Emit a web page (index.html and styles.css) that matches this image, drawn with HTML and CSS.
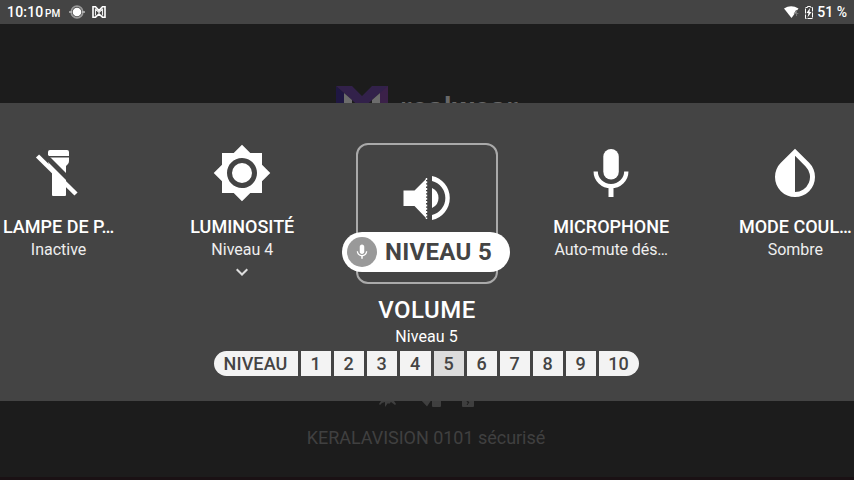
FILE: index.html
```html
<!DOCTYPE html>
<html lang="fr">
<head>
<meta charset="utf-8">
<title>Volume</title>
<link rel="stylesheet" href="styles.css">
</head>
<body>
<div class="screen">
  <header class="status">
    <span class="time">10:10</span><span class="ampm">PM</span>
    <svg class="st-ring" width="16" height="14" viewBox="0 0 16 14"><circle cx="8" cy="7" r="5.800" fill="none" stroke="#999" stroke-width="1.700"/><circle cx="8" cy="7" r="4.300" fill="#fff"/><path d="M0 7h3M13 7h3" stroke="#bbb" stroke-width="1.3"/></svg>
    <svg class="st-logo" width="14" height="12" viewBox="0 0 14 12"><path d="M1 .8h2.500L7 4.500 10.500.8H13v10.400h-2.500L7 8l-3.500 3.200H1z" fill="none" stroke="#fff" stroke-width="1.600"/><path d="M3.500 2.500v7M10.500 2.500v7M3.500 3L7 6.500 10.500 3" fill="none" stroke="#eee" stroke-width="1.100"/></svg>
    <span class="spacer"></span>
    <svg class="st-wifi" width="15" height="12" viewBox="0 0 15 12"><path d="M0 2.500Q7-2 14.500 2.500L7.500 12z" fill="#fff"/><path d="M12.500 4v6M10.300 7.500h4M12.500 4l-2.200 3.500" stroke="#777" stroke-width="1" fill="none"/></svg>
    <svg class="st-batt" width="8" height="13" viewBox="0 0 8 13"><path d="M2.500 1.500V.5h3v1h2v11h-7v-11z" fill="none" stroke="#fff" stroke-width="1" stroke-dasharray="5 1"/><path d="M5 2L1.500 7h2l-1 4.500L6.500 6h-2z" fill="#fff"/></svg>
    <span class="pct">51&nbsp;%</span>
  </header>

  <main class="home">
    <div class="brand">
      <svg width="52" height="48" viewBox="0 0 52 48"><path d="M0 0l8 7v41H0z" fill="#1f1742"/><path d="M0 0h16l10 10L36 0h16v48h-8V7L26 23 8 7z" fill="#32214a"/><path d="M44 7l8-7v48h-8z" fill="#3b2149"/><path d="M8 7l8 7v20H8zM44 7l-8 7v20h8z" fill="#6c6c6c"/></svg>
      <svg class="word" width="120" height="34" viewBox="0 0 120 34"><text x="0" y="27" textLength="118">realwear</text></svg>
    </div>
    <div class="glyphs">
      <svg width="20" height="18" viewBox="0 0 20 18"><path d="M1 12V8h15v4l2 3-1 1-4-3-2 2-1-1-3 4v-5l-3 1-2 2-1-1 2-3z"/></svg>
      <svg width="22" height="18" viewBox="0 0 22 18"><path d="M1 10h12l-5 7.500zM13 8h9v9q0 1-1 1h-7q-1 0-1-1z"/></svg>
      <svg width="12" height="18" viewBox="0 0 12 18"><path d="M0 4h12v13q0 1-1 1H1q-1 0-1-1z"/><path d="M7 9l-2 4h2l-2 3" fill="none" stroke="#1c1c1c"/></svg>
    </div>
    <div class="network">KERALAVISION 0101 sécurisé</div>
  </main>

  <section class="panel">
    <div class="carousel">
      <div class="item">
        <svg class="icon torch" width="60" height="60" viewBox="0 0 60 60"><path d="M21 6q0-2 2-2h17q2 0 2 2v4H21zM21 11.500h21v3.500q0 2-1.500 3.500L39 20v29q0 1-1 1H26q-1 0-1-1V22q-4-3-4-7z" fill="#fff"/><path d="M14 5.500L51.500 43" stroke="#444" stroke-width="5"/><path d="M10.500 10L49 48" stroke="#fff" stroke-width="4.500"/></svg>
        <h3>LAMPE DE P…</h3><p>Inactive</p>
      </div>
      <div class="item lum">
        <svg class="icon" width="60" height="60" viewBox="0 0 24 24"><path fill="#fff" d="M20 15.310L23.310 12 20 8.690V4h-4.690L12 .690 8.690 4H4v4.690L.690 12 4 15.310V20h4.690L12 23.310 15.310 20H20v-4.690zM12 18c-3.310 0-6-2.690-6-6s2.690-6 6-6 6 2.690 6 6-2.690 6-6 6zM12 8a4 4 0 1 0 0 8 4 4 0 0 0 0-8z"/></svg>
        <h3>LUMINOSITÉ</h3><p>Niveau 4</p>
        <svg class="chev" width="12" height="8" viewBox="0 0 12 8"><path d="M.7 1.200l5.300 5.300 5.300-5.300" fill="none" stroke="#ddd" stroke-width="2"/></svg>
      </div>
      <div class="item">
        <div class="focus">
          <svg width="48" height="46" viewBox="0 0 48 46"><path d="M.5 15.500h11L23 4v39L11.500 31H.5z" fill="#fff"/><path d="M23.500 3v41" stroke="#fff" stroke-width="1.400" stroke-dasharray="2 1.300"/><path d="M29 13q6.500 3 6.500 10T29 33z" fill="#fff"/><path d="M29 1A22.500 22.500 0 0 1 29 45v-5A17.500 17.500 0 0 0 29 6z" fill="#fff"/></svg>
          <div class="voice">
            <span class="dot"><svg width="18" height="18" viewBox="0 0 24 24"><path fill="#fff" d="M12 14.500c1.660 0 3-1.340 3-3V5c0-1.660-1.340-3-3-3S9 3.340 9 5v6.500c0 1.660 1.340 3 3 3zm5.300-3.500c0 3-2.540 5.100-5.300 5.100S6.700 14 6.700 11H5c0 3.410 2.720 6.230 6 6.720V21h2v-3.280c3.280-.480 6-3.300 6-6.720h-1.700z"/></svg></span>
            <span>NIVEAU 5</span>
          </div>
        </div>
      </div>
      <div class="item">
        <svg class="icon" width="60" height="60" viewBox="0 0 60 60"><rect x="22.300" y="6" width="15.500" height="30.500" rx="7.750" fill="#fff"/><path d="M14.700 28.500a15.300 14.700 0 0 0 30.600 0" fill="none" stroke="#fff" stroke-width="4.300"/><path d="M30 43v11" stroke="#fff" stroke-width="5"/></svg>
        <h3>MICROPHONE</h3><p class="tight">Auto-mute dés…</p>
      </div>
      <div class="item">
        <svg class="icon" width="60" height="60" viewBox="0 0 60 60"><path fill="#fff" fill-rule="evenodd" d="M30 5.700L44.150 19.850A20 20 0 1 1 15.850 19.850zM30 12.700V49A15 15 0 0 0 40.610 23.400z"/></svg>
        <h3>MODE COUL…</h3><p>Sombre</p>
      </div>
    </div>
    <h2>VOLUME</h2>
    <p class="level">Niveau 5</p>
    <div class="steps">
      <span class="first">NIVEAU</span><span>1</span><span>2</span><span>3</span><span class="wide">4</span><span class="on">5</span><span>6</span><span>7</span><span>8</span><span>9</span><span class="last">10</span>
    </div>
  </section>
</div>
</body>
</html>
```
FILE: styles.css
```css
* { box-sizing: border-box; }
body, h2, h3, p { margin: 0; }
body { background: #1c1c1c; font-family: Roboto, sans-serif; color: #fff; overflow: hidden; }
svg { display: block; flex: none; }

.screen { position: relative; width: 854px; height: 480px; overflow: hidden; display: flex; flex-direction: column; background: #1c1c1c; }

.status { height: 24px; flex: none; background: #444; display: flex; align-items: center; padding: 0 8px 0 7px; font-weight: 500; font-size: 14px; line-height: 24px; white-space: nowrap; }
.time { width: 37px; letter-spacing: .2px; }
.ampm { width: 25px; font-size: 10px; padding: 3px 0 0 1px; }
.st-logo { margin-left: 7px; }
.spacer { flex: 1; }
.st-wifi { margin-right: 6px; }
.st-batt { margin-right: 4px; }
.pct { margin-right: -1px; }

.home { flex: 1; display: flex; flex-direction: column; align-items: center; padding: 62px 2px 0 0; border-bottom: 3px solid #1a1114; }
.brand { display: flex; gap: 12px; height: 48px; width: 180px; }
.word { margin-top: 4px; overflow: visible; }
.word text { font: 700 26px "Open Sans", sans-serif; fill: #686868; }
.glyphs { display: flex; margin-top: 255px; width: 96px; justify-content: space-between; fill: #3f3f3f; }
.network { margin-top: 20px; font-size: 18px; line-height: 22px; color: #404040; letter-spacing: -.03px; }

.panel { position: absolute; left: 0; top: 103px; width: 854px; height: 298px; background: #444; display: flex; flex-direction: column; align-items: center; }
.carousel { width: 921px; height: 193px; flex: none; display: grid; grid-template-columns: repeat(5, 1fr); }
.item { display: flex; flex-direction: column; align-items: center; padding-top: 40px; white-space: nowrap; }
.lum { padding-right: 1px; }
.torch { margin: 3px 4px -3px 0; }
.item h3 { font-weight: 500; font-size: 18px; line-height: 22px; margin-top: 13px; }
.item p { font-size: 16px; line-height: 22px; color: #eee; margin-top: 1px; }
.item .tight { letter-spacing: -.1px; }
.item .chev { margin-top: 7px; }

.focus { width: 142px; height: 141px; border: 2px solid #aaa; border-radius: 12px; display: flex; flex-direction: column; align-items: center; padding-top: 30px; }
.voice { margin: 11px 2px 0 0; width: 168px; height: 40px; flex: none; border-radius: 20px; background: #fff; color: #444; display: flex; align-items: center; padding-left: 5px; gap: 8px; font-size: 24px; font-weight: 700; letter-spacing: .3px; line-height: 42px; white-space: nowrap; }
.dot { width: 30px; height: 30px; border-radius: 50%; background: #999; display: flex; align-items: center; justify-content: center; }

.panel h2 { font-weight: 500; font-size: 24px; line-height: 28px; letter-spacing: .5px; }
.level { margin: 1px 1px 0 0; font-size: 16px; line-height: 24px; letter-spacing: .1px; }
.steps { margin: 2px 2px 0 0; display: flex; gap: 3px; width: 425px; height: 25px; font-weight: 500; font-size: 18px; line-height: 26px; color: #444; text-align: center; }
.steps span { width: 30px; background: #f3f3f3; }
.steps .wide { width: 31px; }
.steps .on { background: #dcdcdc; }
.steps .first { width: 84px; border-radius: 13px 0 0 13px; letter-spacing: .1px; }
.steps .last { width: 40px; border-radius: 0 13px 13px 0; }
```
